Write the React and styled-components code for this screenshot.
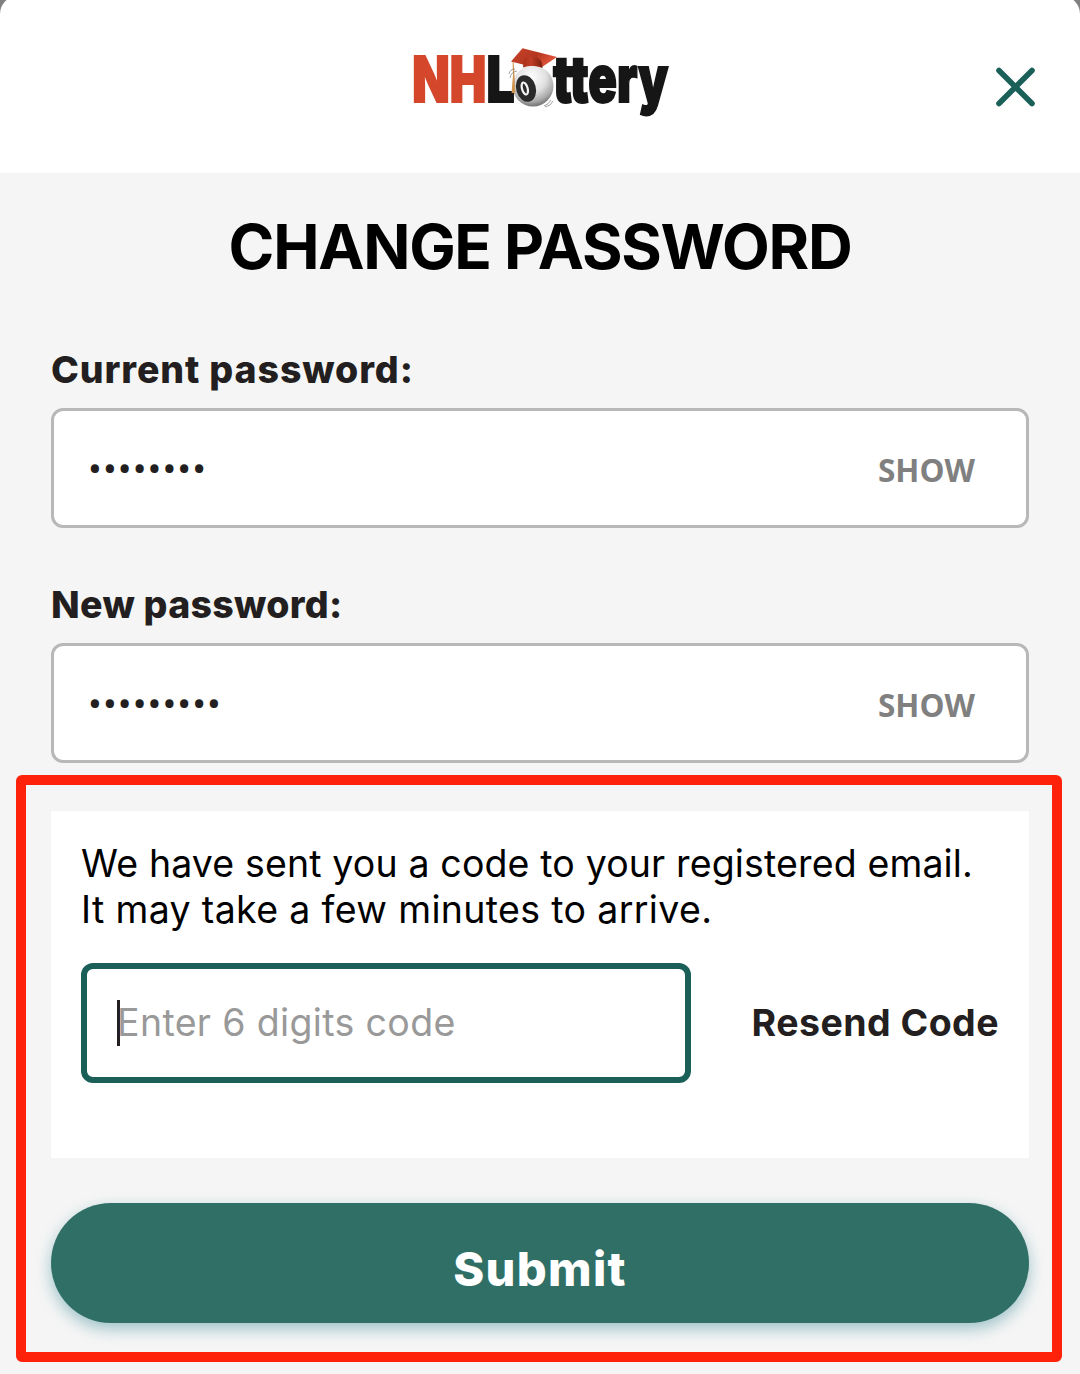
import React from 'react';
import styled, { createGlobalStyle } from 'styled-components';

const GlobalStyle = createGlobalStyle`
  * {
    box-sizing: border-box;
  }

  body {
    margin: 0;
    background: #808080;
    font-family: Inter, Roboto, sans-serif;
    color: #231f20;
  }

  button {
    font-family: inherit;
    color: inherit;
    background: none;
    border: 0;
    padding: 0;
    cursor: pointer;
  }
`;

const Logo = () => (
  <LogoSvg viewBox="0 -10 280 115" role="img" aria-label="NH Lottery">
    <defs>
      <radialGradient id="ball" cx="0.45" cy="0.28" r="0.75">
        <stop offset="0" stopColor="#ffffff" />
        <stop offset="0.5" stopColor="#e0e0e0" />
        <stop offset="0.8" stopColor="#a8a8a8" />
        <stop offset="1" stopColor="#666666" />
      </radialGradient>
      <linearGradient id="cap" x1="0" y1="0" x2="1" y2="0.4">
        <stop offset="0" stopColor="#c8452c" />
        <stop offset="0.6" stopColor="#b5351f" />
        <stop offset="1" stopColor="#e0553a" />
      </linearGradient>
      <linearGradient id="crown" x1="0" y1="0" x2="1" y2="0">
        <stop offset="0" stopColor="#a83019" />
        <stop offset="0.4" stopColor="#c03e25" />
        <stop offset="1" stopColor="#7d1f10" />
      </linearGradient>
    </defs>
    <LogoText transform="translate(12.3 66.5) scale(0.74 1)" textLength="100" fill="#d5472b" stroke="#d5472b">
      NH
    </LogoText>
    <LogoText transform="translate(86.5 66.5) scale(0.74 1)" textLength="38" fill="#161616" stroke="#161616">
      L
    </LogoText>
    <LogoText transform="translate(153 66.5) scale(0.72 1.03)" textLength="160" fill="#161616" stroke="#161616">
      ttery
    </LogoText>
    <circle cx="133" cy="51" r="20.5" fill="url(#ball)" />
    <ellipse cx="126" cy="53.5" rx="9.8" ry="13.6" fill="#2a2a2a" transform="rotate(-16 126 53.5)" />
    <ellipse cx="124.8" cy="53.5" rx="2.8" ry="6.2" fill="none" stroke="#f4f4f4" strokeWidth="2.2" transform="rotate(-16 124.8 53.5)" />
    <path d="M111 26.5 L122.5 13.3 L157 22 L142 32 L123 29.5 Z" fill="url(#cap)" />
    <path d="M123 32.5 L123.5 26 Q125 21.5 132 21.5 Q140 22 142 28 L142.5 33 Q133 29 123 32.5 Z" fill="url(#crown)" />
    <path d="M112.6 27 L113 40 L111.6 58 L115.2 58 L114.5 40 L113.6 27 Z" fill="#d0954f" />
    <path d="M115 34 Q110 34 109 39 M117 36 Q111 37 110 43 M144 71 Q149 69 151 65 M145 72 Q151 71 153 66" fill="none" stroke="#777" strokeWidth="0.7" />
  </LogoSvg>
);

const PasswordField = ({ label, dots, spacing }) => (
  <Field>
    <Label spacing={spacing}>{label}</Label>
    <PasswordBox>
      <Mask>{'•'.repeat(dots)}</Mask>
      <ShowButton>SHOW</ShowButton>
    </PasswordBox>
  </Field>
);

const App = () => (
  <Screen>
    <GlobalStyle />
    <Header>
      <Logo />
      <CloseButton aria-label="Close">
        <svg width="40" height="40" viewBox="0 0 40 40">
          <path d="M3 3.5 L36 36.5 M36 3.5 L3 36.5" stroke="#1b6058" strokeWidth="5.6" strokeLinecap="round" />
        </svg>
      </CloseButton>
    </Header>
    <Content>
      <Title>CHANGE PASSWORD</Title>
      <PasswordField label="Current password:" dots={8} spacing={0.9} />
      <PasswordField label="New password:" dots={9} spacing={0.3} />
      <Highlight>
        <CodePanel>
          <Message>
            <Line spacing={0.14}>We have sent you a code to your registered email.</Line>
            <Line spacing={0.35}>It may take a few minutes to arrive.</Line>
          </Message>
          <CodeRow>
            <CodeBox>
              <Caret />
              <Placeholder>Enter 6 digits code</Placeholder>
            </CodeBox>
            <ResendButton>Resend Code</ResendButton>
          </CodeRow>
        </CodePanel>
        <SubmitButton>Submit</SubmitButton>
      </Highlight>
    </Content>
  </Screen>
);

const Screen = styled.div`
  height: 1374px;
  overflow: hidden;
  display: flex;
  flex-direction: column;
`;

const Header = styled.header`
  flex: none;
  height: 177px;
  margin-top: -4px;
  padding: 4px 44px 0;
  background: #fff;
  border-radius: 18px 18px 0 0;
  display: grid;
  grid-template-columns: 1fr 280px 1fr;
  align-items: center;
`;

const LogoSvg = styled.svg`
  grid-column: 2;
  width: 280px;
  height: 115px;
  margin-top: -8px;
  overflow: visible;
`;

const LogoText = styled.text.attrs({ lengthAdjust: 'spacingAndGlyphs' })`
  font-family: Inter, sans-serif;
  font-size: 63px;
  font-weight: 900;
  stroke-width: 1.8px;
`;

const CloseButton = styled.button`
  justify-self: end;
  width: 40px;
  height: 40px;

  svg {
    display: block;
  }
`;

const Content = styled.main`
  flex: 1;
  background: #f5f5f5;
  padding: 34px 16px 0;
`;

const Title = styled.h1`
  margin: 0 0 58px;
  height: 80px;
  line-height: 80px;
  text-align: center;
  font-size: 62px;
  font-weight: 700;
  letter-spacing: -1.3px;
  color: #000;
  white-space: nowrap;
`;

const Field = styled.div`
  padding: 0 35px;
  height: 235px;
`;

const Label = styled.div`
  height: 63px;
  line-height: 50px;
  font-size: 37.5px;
  font-weight: 800;
  letter-spacing: ${props => props.spacing}px;
`;

const PasswordBox = styled.div`
  display: flex;
  justify-content: space-between;
  align-items: center;
  height: 120px;
  padding: 0 51px 0 34px;
  background: #fff;
  border: 3px solid #b8b8b8;
  border-radius: 12px;
`;

const Mask = styled.span`
  font-family: Roboto, sans-serif;
  font-size: 41px;
  line-height: 46px;
  letter-spacing: 1.05px;
  padding-top: 4px;
`;

const ShowButton = styled.button`
  font-family: 'Open Sans', sans-serif;
  font-size: 31.5px;
  font-weight: 700;
  color: #808080;
  margin-top: 3px;
`;

const Highlight = styled.section`
  width: 1046px;
  height: 587px;
  margin-top: -40px;
  padding: 26px 23px 0 25px;
  border: 10px solid #ff220a;
  border-radius: 6px;
`;

const CodePanel = styled.div`
  height: 347px;
  padding: 30px 30px 0;
  background: #fff;
`;

const Message = styled.p`
  margin: 0;
  height: 122px;
  color: #000;
  font-size: 37.5px;
  line-height: 46px;
`;

const Line = styled.span`
  display: block;
  white-space: nowrap;
  letter-spacing: ${props => props.spacing}px;
`;

const CodeRow = styled.div`
  display: flex;
  justify-content: space-between;
  align-items: center;
`;

const CodeBox = styled.div`
  display: flex;
  align-items: center;
  width: 610px;
  height: 120px;
  padding-left: 30px;
  border: 6px solid #1b6058;
  border-radius: 12px;
`;

const Caret = styled.span`
  width: 3px;
  height: 46px;
  margin-right: -3px;
  background: #231f20;
`;

const Placeholder = styled.span`
  font-size: 37.5px;
  line-height: 46px;
  letter-spacing: 0.35px;
  color: #999;
  white-space: nowrap;
`;

const ResendButton = styled.button`
  font-size: 37.5px;
  font-weight: 700;
  letter-spacing: 0.45px;
  white-space: nowrap;
  margin: 0 0 2px 0;
`;

const SubmitButton = styled.button`
  display: block;
  width: 100%;
  height: 120px;
  margin-top: 45px;
  padding-top: 11px;
  border-radius: 60px;
  background: #2f6f66;
  color: #fff;
  font-size: 47px;
  font-weight: 800;
  letter-spacing: 1.3px;
  box-shadow: 0 6px 15px rgba(27, 120, 135, 0.4);
`;

export default App;
